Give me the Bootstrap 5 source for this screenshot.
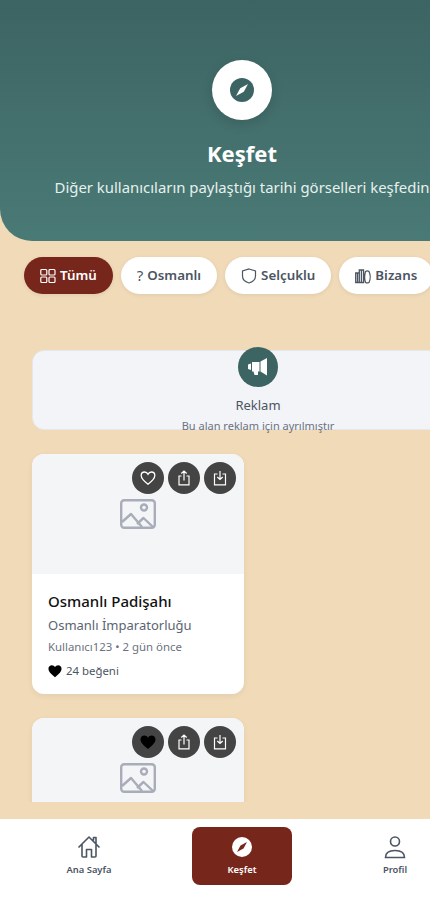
<!DOCTYPE html>
<html lang="tr">
<head>
  <meta charset="UTF-8" />
  <meta name="viewport" content="width=device-width, initial-scale=1.0" />
  <title>Keşfet</title>
  <link href="https://cdn.jsdelivr.net/npm/bootstrap@5.3.3/dist/css/bootstrap.min.css" rel="stylesheet" />
  <style>
    html, body { height: 100%; overflow: hidden; }
    body { font-family: "Noto Sans", "Open Sans", sans-serif; background: #f0dab8; }
    .app-frame { width: 430px; height: 900px; overflow: hidden; }
    .app-scroll { width: 484px; height: 802px; overflow: hidden; flex: none; }
    .hero { height: 241px; padding-top: 60px; background: linear-gradient(180deg, #3c6462, #4a7a76); border-bottom-left-radius: 32px; }
    .hero-badge { width: 60px; height: 60px; box-shadow: 0 4px 12px rgba(0, 0, 0, .12); }
    .hero-title { font-size: 22px; line-height: 32px; margin: 17px 0 6px; }
    .hero-sub { font-size: 14.9px; line-height: 24px; color: #e6f1ee; }
    .chip-row { padding: 16px 0 0 24px; gap: 8px; }
    .chip { height: 37px; padding: 0 16px; border-radius: 19px; font-size: 13.35px; font-weight: 600; gap: 4px; background: #fff; color: #4b5563; box-shadow: 0 1px 4px rgba(0, 0, 0, .08); white-space: nowrap; }
    .chip-on { background: #77261c; color: #fff; }
    .chip-mark { font-size: 15px; font-weight: 400; }
    .ad-box { margin: 56px 0 24px 32px; height: 80px; background: #f3f4f7; border: 1px solid #e5e7eb; border-radius: 12px; }
    .ad-icon { width: 40px; height: 40px; background: #3c6462; margin-top: -4px; flex: none; }
    .ad-title { font-size: 13px; line-height: 20px; color: #4b5563; margin-top: 8px; }
    .ad-text { font-size: 11px; line-height: 16px; color: #6b7280; margin-top: 3px; }
    .post-list { padding-left: 32px; gap: 24px; }
    .post { width: 212px; border-radius: 12px; background: #fff; box-shadow: 0 2px 6px rgba(0, 0, 0, .06); overflow: hidden; flex: none; }
    .post-img { height: 120px; background: #f3f5f7; }
    .post-actions { top: 8px; right: 8px; gap: 4px; }
    .round-btn { width: 32px; height: 32px; background: rgba(0, 0, 0, .72); border: 0; padding: 0; }
    .post-body { padding: 16px; height: 120px; }
    .post-title { font-size: 15px; line-height: 22px; font-weight: 500; color: #111; }
    .post-sub { font-size: 13px; line-height: 20px; color: #5b6472; margin-top: 3px; }
    .post-meta { font-size: 11.4px; line-height: 16px; color: #6b7280; margin-top: 4px; }
    .post-likes { font-size: 11.4px; line-height: 16px; color: #4b5563; margin-top: 8px; gap: 4px; }
    .bottom-nav { width: 484px; height: 81px; flex: none; margin-top: 17px; padding-top: 8px; background: #fff; }
    .nav-cell { width: 153px; }
    .nav-btn { width: 100px; height: 58px; padding-top: 8px; border-radius: 8px; font-size: 9.4px; font-weight: 600; line-height: 14px; color: #4b5563; gap: 4px; }
    .nav-on { background: #77261c; color: #fff; }
  </style>
</head>
<body>
  <div class="app-frame d-flex flex-column">
    <div class="app-scroll">
      <!-- Başlık -->
      <header class="hero text-center text-white">
        <div class="hero-badge rounded-circle bg-white d-flex align-items-center justify-content-center mx-auto">
          <svg width="24" height="24" viewBox="0 0 24 24"><circle cx="12" cy="12" r="12" fill="#3c6462"/><path d="M18 6 13.800 13.800 6 18 10.200 10.200z" fill="#fff"/></svg>
        </div>
        <h1 class="hero-title fw-bold">Keşfet</h1>
        <p class="hero-sub m-0">Diğer kullanıcıların paylaştığı tarihi görselleri keşfedin</p>
      </header>

      <!-- Filtreler -->
      <div class="chip-row d-flex">
        <span class="chip chip-on d-flex align-items-center">
          <svg width="16" height="16" viewBox="0 0 16 16" fill="none" stroke="currentColor" stroke-width="1.200"><rect x=".8" y="1.500" width="6" height="5.500" rx="1"/><rect x="9" y="1.500" width="6" height="5.500" rx="1"/><rect x=".8" y="9" width="6" height="5.500" rx="1"/><rect x="9" y="9" width="6" height="5.500" rx="1"/></svg>
          Tümü
        </span>
        <span class="chip d-flex align-items-center"><span class="chip-mark">?</span> Osmanlı</span>
        <span class="chip d-flex align-items-center">
          <svg width="16" height="16" viewBox="0 0 16 16" fill="none" stroke="currentColor" stroke-width="1.200"><path d="M8 1 14.500 3v5c0 3.500-3 6-6.500 7C4.500 14 1.500 11.500 1.500 8V3z"/></svg>
          Selçuklu
        </span>
        <span class="chip d-flex align-items-center">
          <svg width="16" height="16" viewBox="0 0 16 16" fill="none" stroke="currentColor" stroke-width="1.300"><path d="M.7 5h3.600v9.500H.7zM4.300 2h4.200v12.500H4.300zM6.400 2v12.500M2.500 5v9.500M10.500 3.500c1-.7 2.700-.7 3.500 0 1.500 3 1.500 8 0 11-1 .5-2.500.5-3.500 0-1-3-1-8 0-11z"/></svg>
          Bizans
        </span>
      </div>

      <!-- Reklam -->
      <div class="ad-box d-flex flex-column align-items-center">
        <div class="ad-icon rounded-circle d-flex align-items-center justify-content-center">
          <svg width="20" height="20" viewBox="0 0 20 20" fill="#fff"><path d="M0 7.500 3 6.500v6.500l-3-1zM4 5h7.500v9.500H10V18H6.500L5.500 14.500H4zM12.500 4.500 19 1v17.500l-6.500-4z"/></svg>
        </div>
        <div class="ad-title">Reklam</div>
        <div class="ad-text">Bu alan reklam için ayrılmıştır</div>
      </div>

      <!-- Gönderiler -->
      <div class="post-list d-flex flex-column">
        <article class="post">
          <div class="post-img position-relative d-flex align-items-center justify-content-center">
            <svg width="36" height="30" viewBox="0 0 36 30" fill="none" stroke="#a8adb9" stroke-width="2.400" stroke-linejoin="round"><rect x="1.200" y="1.200" width="33.600" height="27.600" rx="3"/><circle cx="24" cy="8.500" r="3"/><path d="M2 23l9-8 11 13M17 25l6.500-6 9.500 9"/></svg>
            <div class="post-actions position-absolute d-flex">
              <button class="round-btn rounded-circle d-flex align-items-center justify-content-center"><svg width="16" height="16" viewBox="0 0 16 16" fill="none" stroke="#fff" stroke-width="1.300"><path d="M8 14.200C3.500 10.800 1.200 8.500 1.200 5.500 1.200 3.300 2.900 2 4.600 2 6 2 7.300 2.800 8 4.200 8.700 2.800 10 2 11.400 2c1.700 0 3.400 1.300 3.400 3.500 0 3-2.300 5.300-6.800 8.700z"/></svg></button>
              <button class="round-btn rounded-circle d-flex align-items-center justify-content-center"><svg width="16" height="16" viewBox="0 0 16 16" fill="none" stroke="#fff" stroke-width="1.200"><path d="M5.500 6H3v8.800h10V6h-2.500M8 10.500V1M5.300 3.500 8 1l2.700 2.500"/></svg></button>
              <button class="round-btn rounded-circle d-flex align-items-center justify-content-center"><svg width="16" height="16" viewBox="0 0 16 16" fill="none" stroke="#fff" stroke-width="1.200"><path d="M5.500 4H2.500v10.800h11V4h-3M8 1v8.500M5.300 7 8 9.500 10.700 7"/></svg></button>
            </div>
          </div>
          <div class="post-body">
            <div class="post-title">Osmanlı Padişahı</div>
            <div class="post-sub">Osmanlı İmparatorluğu</div>
            <div class="post-meta">Kullanıcı123 • 2 gün önce</div>
            <div class="post-likes d-flex align-items-center">
              <svg width="14" height="14" viewBox="0 0 16 16" fill="#000"><path d="M8 15C3 11 .5 8.500.5 5.300.5 3 2.300 1.500 4.400 1.500 5.900 1.500 7.200 2.300 8 3.700 8.800 2.300 10.100 1.500 11.600 1.500c2.100 0 3.900 1.500 3.900 3.800C15.500 8.500 13 11 8 15z"/></svg>
              24 beğeni
            </div>
          </div>
        </article>
        <article class="post">
          <div class="post-img position-relative d-flex align-items-center justify-content-center">
            <svg width="36" height="30" viewBox="0 0 36 30" fill="none" stroke="#a8adb9" stroke-width="2.400" stroke-linejoin="round"><rect x="1.200" y="1.200" width="33.600" height="27.600" rx="3"/><circle cx="24" cy="8.500" r="3"/><path d="M2 23l9-8 11 13M17 25l6.500-6 9.500 9"/></svg>
            <div class="post-actions position-absolute d-flex">
              <button class="round-btn rounded-circle d-flex align-items-center justify-content-center"><svg width="16" height="16" viewBox="0 0 16 16" fill="#000"><path d="M8 15C3 11 .5 8.500.5 5.300.5 3 2.300 1.500 4.400 1.500 5.900 1.500 7.200 2.300 8 3.700 8.800 2.300 10.100 1.500 11.600 1.500c2.100 0 3.900 1.500 3.900 3.800C15.500 8.500 13 11 8 15z"/></svg></button>
              <button class="round-btn rounded-circle d-flex align-items-center justify-content-center"><svg width="16" height="16" viewBox="0 0 16 16" fill="none" stroke="#fff" stroke-width="1.200"><path d="M5.500 6H3v8.800h10V6h-2.500M8 10.500V1M5.300 3.500 8 1l2.700 2.500"/></svg></button>
              <button class="round-btn rounded-circle d-flex align-items-center justify-content-center"><svg width="16" height="16" viewBox="0 0 16 16" fill="none" stroke="#fff" stroke-width="1.200"><path d="M5.500 4H2.500v10.800h11V4h-3M8 1v8.500M5.300 7 8 9.500 10.700 7"/></svg></button>
            </div>
          </div>
        </article>
      </div>
    </div>

    <!-- Alt menü -->
    <nav class="bottom-nav d-flex justify-content-center">
      <div class="nav-cell d-flex justify-content-center">
        <div class="nav-btn d-flex flex-column align-items-center">
          <svg width="24" height="24" viewBox="0 0 24 24" fill="none" stroke="currentColor" stroke-width="1.600" stroke-linejoin="round"><path d="M1.500 12.500 12 2l10.500 10.500M5 9.500V21a1 1 0 0 0 1 1h3.500v-7.500h5V22H18a1 1 0 0 0 1-1V9.500M16.500 5.500V2.500h2.500V8.500"/></svg>
          Ana Sayfa
        </div>
      </div>
      <div class="nav-cell d-flex justify-content-center">
        <div class="nav-btn nav-on d-flex flex-column align-items-center">
          <svg width="24" height="24" viewBox="0 0 24 24"><circle cx="12" cy="12" r="10" fill="#fff"/><path d="M17 7 13.500 13.500 7 17 10.500 10.500z" fill="#77261c"/></svg>
          Keşfet
        </div>
      </div>
      <div class="nav-cell d-flex justify-content-center">
        <div class="nav-btn d-flex flex-column align-items-center">
          <svg width="24" height="24" viewBox="0 0 24 24" fill="none" stroke="currentColor" stroke-width="1.600"><circle cx="12" cy="6.500" r="4.500"/><path d="M2.500 22.500c0-4.500 3.500-7 9.500-7s9.500 2.500 9.500 7z"/></svg>
          Profil
        </div>
      </div>
    </nav>
  </div>
  <script src="https://cdn.jsdelivr.net/npm/bootstrap@5.3.3/dist/js/bootstrap.bundle.min.js"></script>
</body>
</html>
